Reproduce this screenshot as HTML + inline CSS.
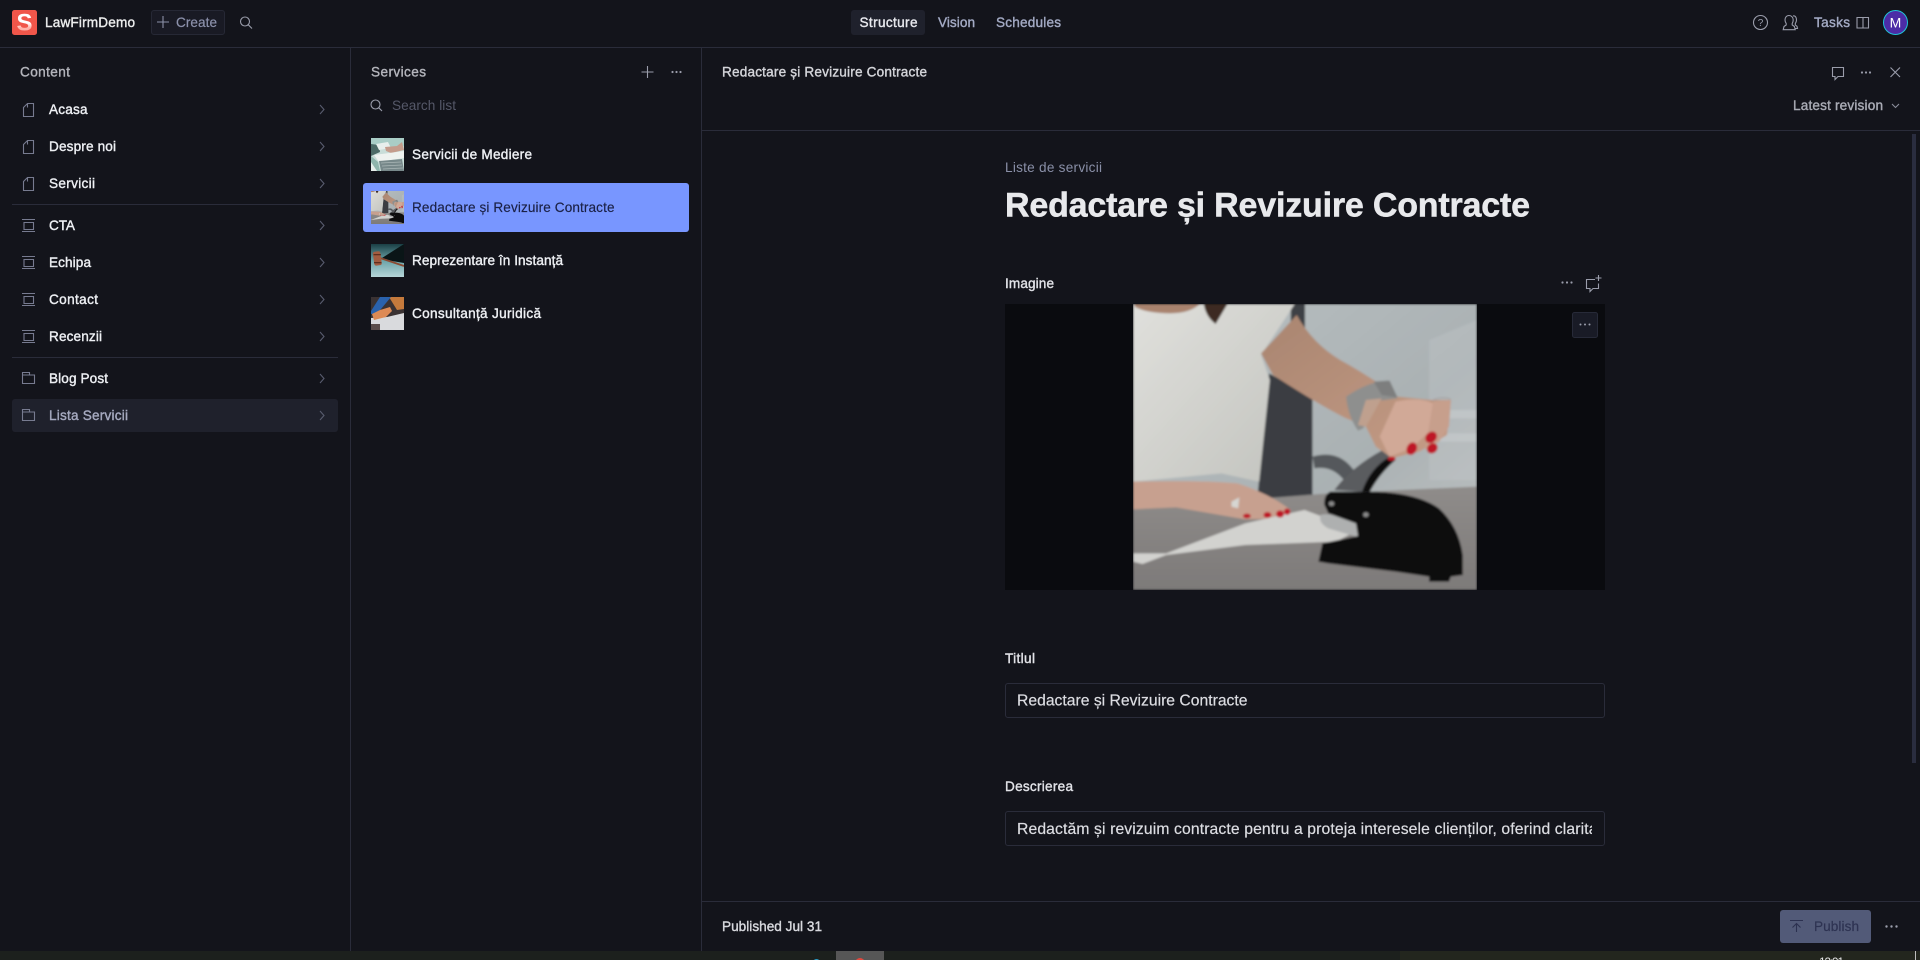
<!DOCTYPE html>
<html lang="ro"><head><meta charset="utf-8"><title>LawFirmDemo</title>
<style>
html,body{margin:0;padding:0;background:#13141b;width:1920px;height:960px;overflow:hidden}
svg{display:block}
text{font-family:"Liberation Sans",sans-serif;font-size:13.6px}
.m{stroke:currentColor;stroke-width:.38px}
.nav{fill:#eef0f4;color:#eef0f4}
.ic{fill:none;stroke:#777b90;stroke-width:1.1}
.ch{fill:none;stroke:#585c6e;stroke-width:1.1}
.ln{fill:none;stroke:#9a9dab;stroke-width:1.1}
.b{stroke:#2a2c3a;stroke-width:1}
</style></head><body>
<svg width="1920" height="960" viewBox="0 0 1920 960" xmlns="http://www.w3.org/2000/svg">
<defs>
<filter id="bl" x="-5%" y="-5%" width="110%" height="110%"><feGaussianBlur stdDeviation="3"/></filter>
<linearGradient id="wall" x1="0" y1="0" x2="1" y2="1"><stop offset="0" stop-color="#b9c0c2"/><stop offset=".6" stop-color="#aab1b3"/><stop offset="1" stop-color="#bfc3c3"/></linearGradient>
<linearGradient id="shirt" x1="0" y1="0" x2="1" y2="1"><stop offset="0" stop-color="#e0e0dc"/><stop offset="1" stop-color="#c2c3be"/></linearGradient>
<linearGradient id="arm" x1="0" y1="0" x2="1" y2="1"><stop offset="0" stop-color="#a98570"/><stop offset="1" stop-color="#c59c86"/></linearGradient>
<linearGradient id="tbl" x1="0" y1="0" x2="0" y2="1"><stop offset="0" stop-color="#8f8c8a"/><stop offset="1" stop-color="#7d7a79"/></linearGradient>
<linearGradient id="sg" x1="0" y1="0" x2="0" y2="1"><stop offset="0" stop-color="#fff"/><stop offset=".5" stop-color="#fff"/><stop offset=".68" stop-color="#ffb3aa"/></linearGradient>
<linearGradient id="t3" x1="0" y1="0" x2="0" y2="1"><stop offset="0" stop-color="#1a3f45"/><stop offset=".5" stop-color="#6ba4a9"/><stop offset="1" stop-color="#b6d6d8"/></linearGradient>
<clipPath id="dc"><rect x="1017" y="811" width="575" height="34"/></clipPath>
<g id="photo">
<rect x="336" y="132" width="870" height="858" fill="url(#wall)"/>
<path d="M1085 240L1206 180V660H1085Z" fill="#c6cbcc" opacity=".3"/>
<path d="M1130 450H1206V475H1130ZM1110 520H1206V545H1110Z" fill="#cfd3d3" opacity=".45"/>
<rect x="735" y="132" width="36" height="130" fill="#3d4145"/>
<path d="M680 340L790 410V720H650Z" fill="#3a3e43"/>
<path d="M790 590Q860 565 900 640L880 680Q850 615 795 625Z" fill="#55585c"/>
<path d="M336 745L700 712L830 700L1206 680V990H336Z" fill="url(#tbl)"/>
<path d="M336 132H745L660 285L682 360L655 665L560 640L336 665Z" fill="url(#shirt)"/>
<path d="M340 132H505Q480 160 430 160Q370 160 340 140Z" fill="#a9836e"/>
<path d="M515 132H575L545 192Q520 170 515 132Z" fill="#3d2a22"/>
<path d="M750 165Q790 250 860 300Q930 345 1005 410L1090 420L1140 420L1130 525L1060 575L990 595L950 560L925 500L870 472Q800 430 690 345L660 280Z" fill="url(#arm)"/>
<path d="M1000 425Q1060 410 1095 430L1090 510L1040 565L985 590L960 530Z" fill="#d1a997"/>
<path d="M1095 425L1140 420L1135 500L1110 545L1075 570Z" fill="#c79f8c"/>
<path d="M875 410Q930 365 980 362L1005 415L960 422L918 505L905 512Q880 470 875 410Z" fill="#8e8f8e"/>
<path d="M925 420L965 415L925 500L905 495Z" fill="#bfa08e"/>
<path d="M945 365L985 362L1005 412L965 405Z" fill="#7d7e7e"/>
<path d="M1095 420Q1120 408 1140 418" fill="none" stroke="#a8a8a8" stroke-width="5"/>
<path d="M336 665Q500 660 600 670Q680 700 735 750L725 775L620 778L445 742L336 748Z" fill="#c7a08f"/>
<path d="M585 725L605 712L602 745L585 740Z" fill="#d6d6d2"/>
<path d="M336 880L420 880L620 790L770 750L905 810L850 845L620 855L420 885L360 912L336 905Z" fill="#d2d2cf"/>
<path d="M810 765Q840 755 900 790L990 825L985 835L900 830L830 805Q805 790 810 765Z" fill="#aeb0b0"/>
<path d="M845 690Q890 620 965 572L985 590Q935 625 915 695Z" fill="#5a5b5e"/>
<path d="M915 695Q935 625 985 590L1000 600Q960 640 935 695Z" fill="#0c0c0e"/>
<path d="M820 735Q818 705 835 695L930 695Q1050 695 1110 745Q1160 800 1170 885V945L1140 950L1135 965L1085 965L1085 950L1000 935L830 910L805 905L815 850L905 828L900 790L830 760Z" fill="#0b0b0d"/>
<circle cx="838" cy="731" r="7" fill="#8a8a8a"/><circle cx="925" cy="764" r="7" fill="#8a8a8a"/>
<g fill="#be1428"><ellipse cx="1041" cy="566" rx="13" ry="19" transform="rotate(15 1041 566)"/><ellipse cx="1090" cy="532" rx="14" ry="18" transform="rotate(25 1090 532)"/><ellipse cx="1093" cy="565" rx="13" ry="16" transform="rotate(25 1093 565)"/><ellipse cx="990" cy="596" rx="10" ry="6"/><ellipse cx="726" cy="755" rx="8" ry="10"/><ellipse cx="708" cy="762" rx="10" ry="11"/><ellipse cx="676" cy="765" rx="10" ry="9"/><ellipse cx="624" cy="768" rx="10" ry="7"/></g>
</g>
</defs>

<rect width="1920" height="960" fill="#13141b"/>

<!-- top bar -->
<rect x="12" y="10" width="25" height="25" rx="2.500" fill="#f0564a"/>
<text x="24.500" y="30.500" text-anchor="middle" font-weight="700" style="font-size:24px" fill="url(#sg)">S</text>
<text x="45" y="27" textLength="90" class="m" fill="#eceded" color="#eceded">LawFirmDemo</text>
<rect x="151.500" y="10.500" width="73" height="24" rx="2.500" fill="#191a24" stroke="#262835"/>
<path d="M163 16V28M157 22H169" fill="none" stroke="#8b90a8" stroke-width="1.1"/>
<text x="176" y="27" textLength="41" fill="#8c91ab" stroke="#8c91ab" stroke-width=".2">Create</text>
<g class="ln" fill="none"><circle cx="245" cy="21.500" r="4.500"/><path d="M248.300 24.800L252 28.500"/></g>
<rect x="851" y="10" width="74" height="25" rx="3" fill="#1f212c"/>
<text x="859.500" y="27" textLength="58" class="m" fill="#e8e9ee" color="#e8e9ee">Structure</text>
<text x="938" y="27" textLength="37" class="m" fill="#a3aac4" color="#a3aac4">Vision</text>
<text x="996" y="27" textLength="65" class="m" fill="#a3aac4" color="#a3aac4">Schedules</text>
<g class="ln"><circle cx="1760.500" cy="22.500" r="7"/></g>
<text x="1760.500" y="26" text-anchor="middle" style="font-size:10px" fill="#9a9dab">?</text>
<path class="ln" d="M1789 15.500c-2.500 0-4 2-4 4.500 0 1.500.7 2.700 1.200 3.500v1.500l-2.200 1.500-.8 3.200h12l-.8-3.200-2.200-1.500v-1.500c.5-.8 1-2 1-3.500 0-2.500-1.700-4.500-4.200-4.500zM1793 16c2.500-.8 3.500 2 3.500 4 0 1.500-.7 2.700-1.200 3.500v1.500l1.700 1.300.5 2.200h-2.500"/>
<text x="1814" y="27" textLength="36" class="m" fill="#a3aac4" color="#a3aac4">Tasks</text>
<path class="ln" d="M1857 17.500H1868.500V28H1857ZM1863 17.500V28"/>
<circle cx="1895.500" cy="22.500" r="12" fill="#4c2ca6" stroke="#22c4d8" stroke-width="1"/>
<text x="1895.500" y="27.500" text-anchor="middle" style="font-size:14px" fill="#fff">M</text>
<path class="b" d="M0 47.500H1920"/>

<!-- panel separators -->
<path class="b" d="M350.500 48V951M701.500 48V951"/>

<!-- content panel -->
<text x="20" y="76.500" textLength="50" class="m" fill="#b4b5bc" color="#b4b5bc">Content</text>

<g>
<path class="ic" d="M27.500 103.500H33.500V116.500H23.500V107.500ZM27.500 103.500V107.500"/>
<path class="ic" d="M27.500 140.500H33.500V153.500H23.500V144.500ZM27.500 140.500V144.500"/>
<path class="ic" d="M27.500 177.500H33.500V190.500H23.500V181.500ZM27.500 177.500V181.500"/>
<path class="ic" d="M22 219.500H35M24 222.500H33.500V229.500H24ZM22 231.500H35"/>
<path class="ic" d="M22 256.500H35M24 259.500H33.500V266.500H24ZM22 268.500H35"/>
<path class="ic" d="M22 293.500H35M24 296.500H33.500V303.500H24ZM22 305.500H35"/>
<path class="ic" d="M22 330.500H35M24 333.500H33.500V340.500H24ZM22 342.500H35"/>
</g>
<rect x="12" y="399" width="326" height="33" rx="3" fill="#1f212c"/>
<path class="ic" d="M22.500 375V372.500H29.500V375M22.500 375H34.500V383.500H22.500Z"/>
<path class="ic" d="M22.500 412V409.500H29.500V412M22.500 412H34.500V420.500H22.500Z"/>
<g class="ch">
<path d="M320 105L324 109.500L320 114"/><path d="M320 142L324 146.500L320 151"/><path d="M320 179L324 183.500L320 188"/>
<path d="M320 221L324 225.500L320 230"/><path d="M320 258L324 262.500L320 267"/><path d="M320 295L324 299.500L320 304"/><path d="M320 332L324 336.500L320 341"/>
<path d="M320 374L324 378.500L320 383"/><path d="M320 411L324 415.500L320 420"/>
</g>
<path class="b" d="M12 204.500H338M12 357.500H338"/>
<g class="nav">
<text class="m" x="49" y="114" textLength="38.500">Acasa</text>
<text class="m" x="49" y="151" textLength="67">Despre noi</text>
<text class="m" x="49" y="188" textLength="46">Servicii</text>
<text class="m" x="49" y="230" textLength="26">CTA</text>
<text class="m" x="49" y="267" textLength="42">Echipa</text>
<text class="m" x="49" y="304" textLength="49">Contact</text>
<text class="m" x="49" y="341" textLength="53">Recenzii</text>
<text class="m" x="49" y="383" textLength="59">Blog Post</text>
</g>
<text class="m" x="49" y="420" textLength="79" fill="#a6aac0" color="#a6aac0">Lista Servicii</text>

<!-- services panel -->
<text x="371" y="76.500" textLength="55" class="m" fill="#b4b5bc" color="#b4b5bc">Services</text>
<path d="M647.500 66V78M641.500 72H653.500" fill="none" stroke="#9a9dab" stroke-width="1.1"/>
<g fill="#9a9dab"><circle cx="672.500" cy="72" r="1.100"/><circle cx="676.500" cy="72" r="1.100"/><circle cx="680.500" cy="72" r="1.100"/></g>
<g class="ln"><circle cx="375.500" cy="104.500" r="4.500"/><path d="M378.800 107.800L382 111"/></g>
<text x="392" y="110" textLength="64" fill="#555868">Search list</text>

<rect x="363" y="183" width="326" height="49" rx="3" fill="#7896ff"/>

<!-- thumb 1 -->
<svg x="371" y="138" width="33" height="33" viewBox="0 0 33 33">
<rect width="33" height="33" fill="#c9ddd8"/>
<path d="M0 0H33V8L20 12L8 6L0 10Z" fill="#a9cdc6"/>
<path d="M0 6L8 7L9 14L0 18Z" fill="#4c6a66"/>
<path d="M5 6L17 4L20 10L8 12Z" fill="#e8efec"/>
<path d="M14 9L26 8L31 4L33 12L20 15L15 13Z" fill="#c49c8c"/>
<path d="M3 17L33 13V20L8 24Z" fill="#eef2ef"/>
<path d="M8 23L31 21L33 33H10Z" fill="#77888a"/>
<path d="M10 25L30 24M11 28L31 27M12 31L32 30" stroke="#aab6b6" stroke-width=".8"/>
<path d="M0 18L7 24L9 33H0Z" fill="#8fb5ac"/>
<path d="M0 24L6 33H0Z" fill="#e6eeea"/>
</svg>
<!-- thumb 2 -->
<svg x="371" y="191" width="33" height="33" viewBox="410 132 723 858" preserveAspectRatio="none"><use href="#photo" filter="url(#bl)"/></svg>
<!-- thumb 3 -->
<svg x="371" y="244" width="33" height="33" viewBox="0 0 33 33">
<rect width="33" height="33" fill="url(#t3)"/>
<path d="M11 14L33 0V19L21 17Z" fill="#0a1517"/>
<path d="M9 14L33 22" stroke="#8b4a32" stroke-width="1.800"/>
<rect x="2.500" y="7.500" width="7.500" height="14" rx="2" fill="#a25c40" transform="rotate(-8 6 14)"/>
<rect x="2.500" y="10" width="7.500" height="1.300" fill="#5f2f1e"/><rect x="3" y="18" width="7.500" height="1.300" fill="#5f2f1e"/>
</svg>
<!-- thumb 4 -->
<svg x="371" y="297" width="33" height="33" viewBox="0 0 33 33">
<rect width="33" height="33" fill="#3a3233"/>
<path d="M18 0H33V12L26 13Z" fill="#c57a3c"/>
<path d="M0 14L9 0H20L10 12L5 17H0Z" fill="#2a62ad"/>
<path d="M0 33V21L16 20L33 16V33Z" fill="#d9dadd"/>
<path d="M1 17L9 13L19 10L21 14L15 20L3 23Z" fill="#dd8a55"/>
<rect x="0" y="27" width="9" height="6" fill="#5a4c4a"/>
</svg>

<text class="m" x="412" y="159" textLength="120" fill="#eef0f4" color="#eef0f4">Servicii de Mediere</text>
<text x="412" y="212" textLength="202.500" fill="#1b2145" stroke="#1b2145" stroke-width=".15">Redactare și Revizuire Contracte</text>
<text class="m" x="412" y="265" textLength="151" fill="#eef0f4" color="#eef0f4">Reprezentare în Instanță</text>
<text class="m" x="412" y="318" textLength="129" fill="#eef0f4" color="#eef0f4">Consultanță Juridică</text>

<!-- document pane -->
<text x="722" y="76.500" textLength="205" class="m" fill="#d4d5da" color="#d4d5da">Redactare și Revizuire Contracte</text>
<path class="ln" d="M1832.500 67.500H1843.500V76.500H1838L1835 79.500V76.500H1832.500Z"/>
<g fill="#9a9dab"><circle cx="1862" cy="72.500" r="1.100"/><circle cx="1866" cy="72.500" r="1.100"/><circle cx="1870" cy="72.500" r="1.100"/></g>
<path class="ln" d="M1890.500 67.500L1900 77M1900 67.500L1890.500 77"/>
<text x="1793" y="110" textLength="90" class="m" fill="#a9abb5" color="#a9abb5">Latest revision</text>
<path d="M1892 104L1895.500 107.500L1899 104" fill="none" stroke="#8a8d9b" stroke-width="1.100"/>
<path class="b" d="M702 130.500H1920"/>
<rect x="1912" y="134" width="4" height="629" fill="#2a2d3f"/>

<text x="1005" y="172" textLength="97" fill="#8a90a8">Liste de servicii</text>
<text x="1005" y="216.500" textLength="525" font-weight="700" style="font-size:34px;stroke:#e8e9ec;stroke-width:.5px" fill="#e8e9ec">Redactare și Revizuire Contracte</text>

<text class="m" x="1005" y="288" textLength="49" fill="#e2e3e8" color="#e2e3e8">Imagine</text>
<g fill="#9a9dab"><circle cx="1562.500" cy="282.500" r="1.100"/><circle cx="1567" cy="282.500" r="1.100"/><circle cx="1571.500" cy="282.500" r="1.100"/></g>
<path class="ln" d="M1595 279.500H1586.500V288.500H1590V291.500L1593 288.500H1598.500V283.500M1598.500 275V281M1595.500 278H1601.500"/>

<rect x="1005" y="304" width="600" height="286" fill="#0a0b0f"/>
<svg x="1133" y="304" width="344" height="286" viewBox="336 132 870 858" preserveAspectRatio="none"><use href="#photo" filter="url(#bl)"/></svg>
<rect x="1572.500" y="312.500" width="25" height="25" rx="2" fill="#191b26" stroke="#272a38"/>
<g fill="#9a9dab"><circle cx="1580.500" cy="324.500" r="1"/><circle cx="1585" cy="324.500" r="1"/><circle cx="1589.500" cy="324.500" r="1"/></g>

<text class="m" x="1005" y="663" textLength="30" fill="#e2e3e8" color="#e2e3e8">Titlul</text>
<rect x="1005.500" y="683.500" width="599" height="34" rx="2.500" fill="#13141b" stroke="#2a2c3a"/>
<text x="1017" y="705.500" textLength="230.500" style="font-size:15.7px;stroke:#dcdde2;stroke-width:.2px" fill="#dcdde2">Redactare și Revizuire Contracte</text>

<text class="m" x="1005" y="791" textLength="68" fill="#e2e3e8" color="#e2e3e8">Descrierea</text>
<rect x="1005.500" y="811.500" width="599" height="34" rx="2.500" fill="#13141b" stroke="#2a2c3a"/>
<g clip-path="url(#dc)"><text x="1017" y="834" style="font-size:15.7px;letter-spacing:.13px;stroke:#dcdde2;stroke-width:.2px" fill="#dcdde2">Redactăm și revizuim contracte pentru a proteja interesele clienților, oferind claritate</text></g>

<!-- footer -->
<path class="b" d="M702 901.500H1920"/>
<text class="m" x="722" y="931" textLength="100" fill="#d8d9de" color="#d8d9de">Published Jul 31</text>
<rect x="1780" y="910" width="91" height="33" rx="3" fill="#525a78"/>
<path d="M1790 920.500H1803M1796.500 932V924M1792.500 927.500L1796.500 923.500L1800.500 927.500" fill="none" stroke="#2c3150" stroke-width="1.100"/>
<text x="1814" y="931" textLength="45" fill="#2e3352" stroke="#2e3352" stroke-width=".2">Publish</text>
<g fill="#9a9dab"><circle cx="1886.500" cy="926.500" r="1.200"/><circle cx="1891.500" cy="926.500" r="1.200"/><circle cx="1896.500" cy="926.500" r="1.200"/></g>

<!-- strip at bottom -->
<rect y="951" width="1920" height="9" fill="#1c201d"/>
<rect x="1400" y="951" width="520" height="9" fill="#26291f" opacity=".7"/>
<rect x="836" y="951" width="48" height="9" fill="#565656"/>
<circle cx="860" cy="963" r="5" fill="#e0483e"/>
<circle cx="816.500" cy="963" r="4" fill="#2a9bc7"/>
<text x="1819" y="966" textLength="25" style="font-size:12px" fill="#e6e6e6">12:01</text>
<rect x="1915" y="951" width="1" height="9" fill="#bdbdbd"/>
</svg>
</body></html>
